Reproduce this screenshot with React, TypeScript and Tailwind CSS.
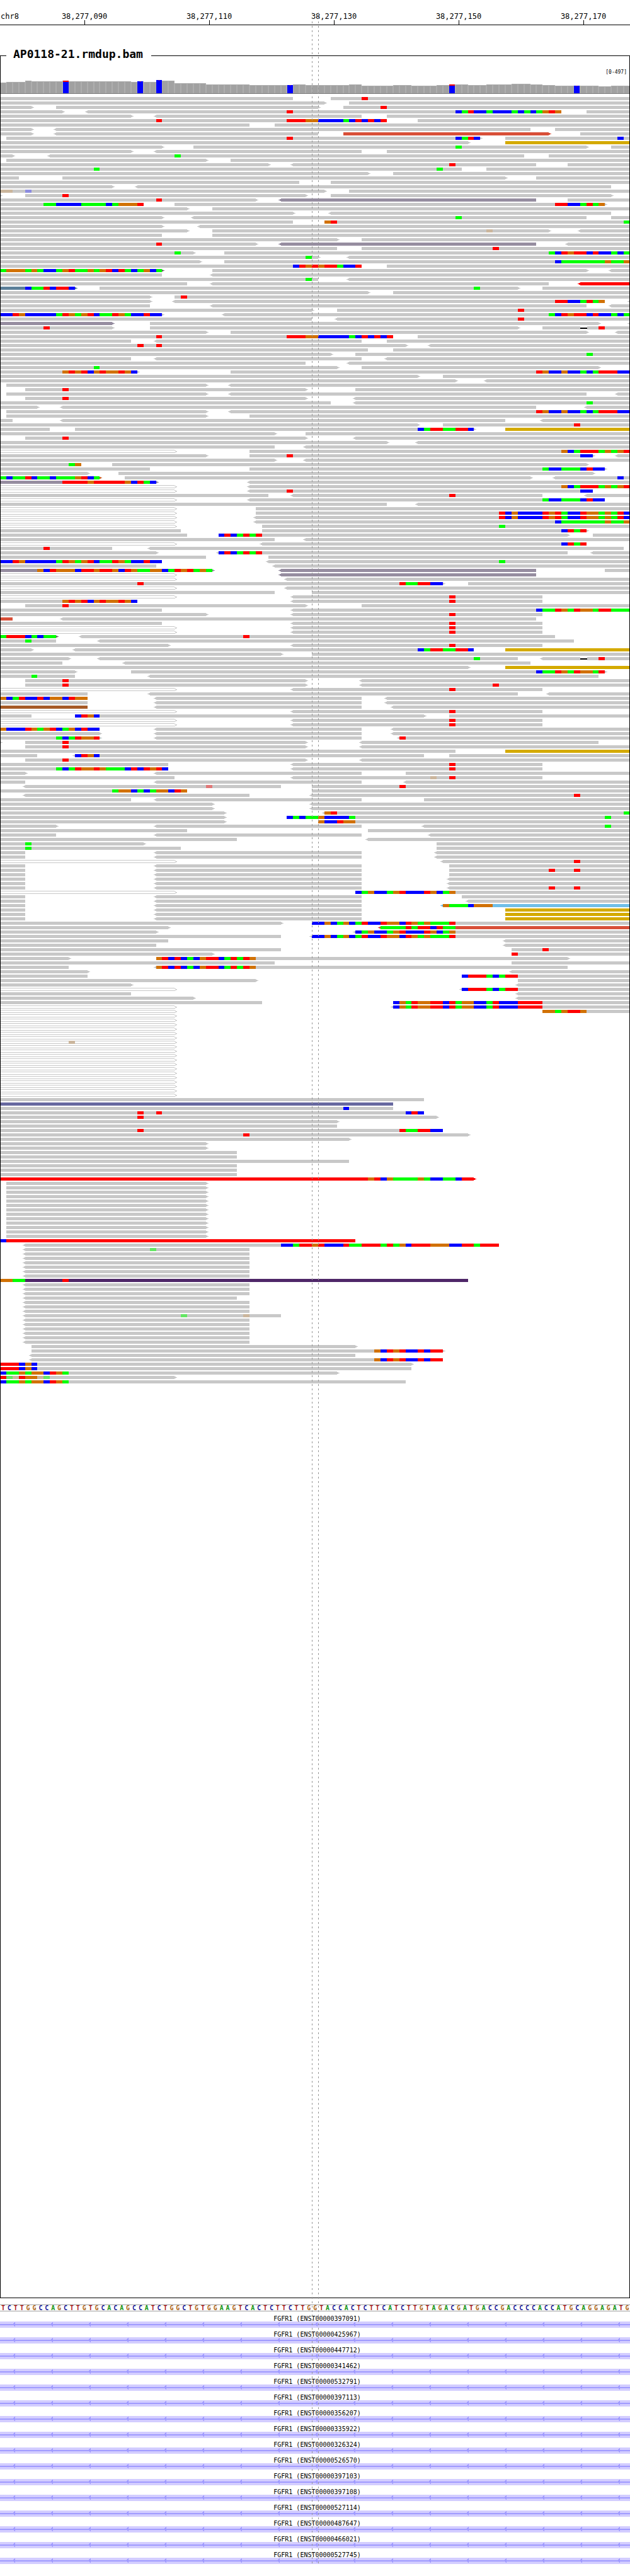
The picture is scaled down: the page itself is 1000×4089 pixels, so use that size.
import React from "react";

const MONO = "font-['DejaVu_Sans_Mono','Liberation_Mono',monospace]";

/* Horizontal pixel of the left edge of base n (101 bases over 1000 units). */
const px = (n: number) => Math.round((n * 99) / 10);

const FILL: Record<string, string> = {
  A: "#00ff00",
  C: "#0000ff",
  G: "#d17105",
  T: "#ff0000",
  a: "#64e664",
  c: "#8c8ce0",
  g: "#cbb69d",
  t: "#e07878",
};

const READ_FILL: Record<string, string> = {
  p: "#968da0",
  s: "#d84f38",
  y: "#d4aa00",
  r: "#ff0000",
  b: "#5b7f99",
  k: "#6e6e6e",
  v: "#67689f",
  u: "#4e2768",
  w: "#a65a26",
  l: "#70bfe8",
  n: "#c8641e",
};

/*
 * One string per alignment row. A read is written
 *   [o][<]start-end[>][:colour][@pos BASES]...
 * o = outlined (mapping quality zero), < and > = strand arrows,
 * lower-case bases have a low quality, "-" is a deletion.
 */
const TC = "CATTAATTC";
const ACT = "ACTGTTCTCCACA";
const CCTG = "CCTGCCCCCATGAGTCAATGACCTCC";
const TGCC = "TGCCGCCACATTTCC";
const TCG = "TCGCCCCTGTACCTGGAGATC";
const CAG = "CAGCCAGTCCCTGCAG";
const CCG = "CCGCAGCATCCTGGCTGAGAAAT";
const GTC = "GTCTCACGTTCATATG";
const CGA = "CGATGGTTCTAGGCCATCCCTTTT";
const OUT = "o0-28>";
const rep = (s: string, n: number): string[] => Array(n).fill(s);

const ROWS: string[] = [
  "0-47 53-101@58T",
  "0-52> 56-101",
  "0-5> 9-51> 55-101@61T",
  "0-10> <14-90@46T@73CATCCACCCACACAGTG 94-101",
  "0-21> <25-58 62-101",
  "0-62@25T@46TTTGGCCCCACTCTCT 67-101",
  "0-40 44-101",
  "0-5> <9-85 89-101",
  "0-5> <9-51 55-88>:s 93-101",
  "1-77>@46T@73CATC 81-101@99C",
  "0-75> 81-101:y",
  "0-26> 31-94>@73A 98-101",
  "0-21> <25-58 62-101",
  "0-2> <8-84@28A 88-101",
  "1-33> 37-101",
  "0-43> <47-86@72T 91-101",
  "0-74@15A@70A 78-101",
  "0-59> 63-101",
  "0-3 10-81> 86-101",
  "0-48 53-101",
  "0-18> <22-98",
  "0-52>@0gg@4c 56-101",
  "0-0> 4-49>@10T 53-98>",
  "0-41>@25T <45-86:p 91-101",
  "0-23@7AACCCCAAAACAGGGT 28-97>@89TTCCATAG",
  "0-30> 34-101",
  "0-47> <53-98",
  "0-26> <31-94@73A 98-101",
  "0-47 52-101@52GT@100A",
  "0-26> <32-101",
  "0-30> 34-88>@78g <93-101",
  "0-26 34-101",
  "0-54> 58-101",
  "0-41>@25T <45-86:p <91-101",
  "0-54 58-101@79T",
  `0-31>@28A 36-101@88${ACT}`,
  "0-51>@49A <56-101",
  "0-32> 36-101@89CAAAAAAAGAAG",
  "0-58@47CTGTGTTACCT 62-101",
  "0-26>:k@0AGGGAGACCAGTAAGAGTCTACAGCA 34-94> <98-101",
  "0-26 <34-101",
  "0-51@49A <56-101",
  "0-30 <34-88 <93-101:r",
  "0-12>:b@4CAATCTTC 16-83>@76A 87-101",
  "0-59> 63-101",
  "0-24> 28-101@29T",
  "0-24> <28-97@89TTCCATAG <101-101",
  "0-24 <34-94 <98-101",
  "0-50> 54-101@83T",
  `0-26>@0${CCTG} <36-101@88${ACT}`,
  "0-50 <54-101@83T",
  "0-18>:p 24-96> <101-101",
  "0-18>@7T 24-83> 87-101@93-@96T",
  "0-33> 37-94> <99-101",
  "0-63@25T@46TTTGGCCCCCACTCTCT 67-101",
  "0-21 <25-58 62-101",
  "0-65>@22T@25T <69-101",
  "0-59 63-101",
  "0-53> 57-101@94A",
  "0-21 <25-58 <62-101",
  "0-49 <56-101",
  "0-54>@15A 58-96>",
  `0-22>@10GTGTCGTGGTGC 37-101@86${TGCC}`,
  "0-67> 71-101",
  "0-73> <78-101",
  "1-33> <37-101",
  "4-49>@10T 57-101",
  "1-33> <37-94 <99-101",
  "4-49>@10T <57-101",
  "0-53 <57-101@94A",
  "0-6> <10-86 <94-101",
  `1-33> <37-101@86${TGCC}`,
  "1-33> 40-101",
  "0-2 <10-81 <87-101",
  "0-67> 71-101@92T",
  `0-8 12-76>@67${TC} 81-101:y`,
  "0-44> 49-101",
  "4-49>@10T <57-101",
  "0-62> <67-101",
  "0-44 <49-101",
  `${OUT} 40-101@90GCATTTAGAGT`,
  "0-33> 40-95>@46T@93CC <99-101",
  "0-44> <49-101",
  "0-13@11AG 18-94>",
  "0-24 40-97>@87ACCAAACTCC",
  "0-14> 19-95>",
  "0-16>:n@0ACAATCAACAAAGTCA 20-85> <89-101@99C",
  "0-25>:p@10TTTTGTTTTTGCTAC <40-101",
  `${OUT} <40-101@90GCATTTAGAGT`,
  `${OUT} <40-95@46T@93CC`,
  "0-43 <47-87@72T <94-101",
  `${OUT} <40-97@87ACCAAACTCC`,
  "0-62 <67-101",
  `${OUT} 41-101`,
  `${OUT} 41-101@80${TCG}`,
  `${OUT} <41-101@80${TCG}`,
  `${OUT} <41-101@89CAAAAAAAGAAG`,
  `${OUT} 42-101@80A`,
  "0-29 42-94>@90CTAT",
  "0-30 35-91>@35CTCATAT 95-101",
  "0-44 <49-101",
  `${OUT} <42-94@90CTAT`,
  "0-18@7T <24-100",
  "0-25> <35-91@35CTCATAT <95-101",
  "0-33 43-101",
  `0-26@0${CCTG} <43-101@80A`,
  "0-25 <44-101",
  "0-34>:p@6GCTGGGCTTGTTGCTGAAGGCATGTAGA <45-86:p 97-101",
  `${OUT} <45-86:p`,
  `${OUT} <46-101`,
  "0-71>@22T@64TAATTCC 75-101",
  `${OUT} <46-101`,
  "0-44 50-101",
  `${OUT} <47-87@72T`,
  "0-22@10GTGTCGTGGTGC <47-87@72T",
  "4-49>@10T 58-101",
  "0-26 <47-101@86CAATGATGGATTAAA",
  "0-33> <47-87@72T",
  "0-2:s <10-86",
  "0-26 <47-87@72T",
  ...rep(`${OUT} <47-87@72T`, 2),
  "0-9>:k@0ATTTCACAA <13-89@39T",
  "0-9@4A <16-92",
  "0-27> <47-87@72T",
  `0-5> <12-76@67${TC} 81-101:y`,
  "0-45> 50-101",
  "0-11> <16-83@76A <87-101@93-@96T",
  "0-10 <20-85",
  "0-75> 81-101:y",
  "0-12> 21-97>@86CAATGATGGAT",
  "0-12@5A <24-96",
  "4-49>@10T <58-101",
  "4-49>@10T <58-101@79T",
  `${OUT} <47-87@72T`,
  "0-14 <24-83 <88-101",
  "0-14@0GCATCCTCGGCTGG <25-58 <62-101",
  "0-14 <25-58 <62-101",
  "0-14:w <25-58 <63-101",
  `${OUT} <47-87@72T`,
  "0-5 12-68>@12CTGC 72-101",
  ...rep(`${OUT} <47-87@72T`, 2),
  "0-16@0GCCCTGAGTCAGCTCC <25-58 <63-101",
  "0-16> <25-58 <63-101",
  "0-16>@9ACATGGT <25-58 <64-101@64T",
  "0-0> 4-49>@10T <58-96",
  "4-49>@10T <58-101",
  "0-73 81-101:y",
  "0-6 <12-68@12CTGC 72-101",
  "4-49>@10T <58-101",
  "0-27 <47-87@72T",
  "0-27@9ACATGGTGAAACTCTGTC <47-87@72T",
  "0-4> <25-58 65-101",
  "0-28 <47-87@69g@72T",
  "0-4 <25-58 <65-101",
  "<4-45@33t 50-101@64T",
  "0-30@18AGGCACAGGCTG 50-101",
  "<4-40 <50-101@92T",
  "0-21 <25-58 68-101",
  ...rep("0-34> <50-101", 2),
  "0-36> <52-101@52GT@100A",
  "0-36> 46-101@46CACAAGCCCCA@97A",
  "0-36> 51-101@51GCCTGG",
  "0-9> <25-58 <68-101@97A",
  "0-30 59-101",
  "0-9 <25-58 <69-101",
  "0-38 <59-101",
  "0-23>@4A 70-101",
  "0-29@4A 70-101",
  ...rep("0-4 <25-58 <70-101", 2),
  `${OUT} <71-101@92T`,
  "0-4 <25-58 72-101",
  "0-4 <25-58 72-101@88T@92T",
  "0-4 <25-58 72-101",
  ...rep("0-4 <25-58 <72-101", 2),
  "0-4 <25-58 <72-101@88T@92T",
  `${OUT} 57-101@57${CAG}`,
  "0-4 <25-58 74-101",
  "0-4 <25-58 <75-101",
  "0-4 <25-58 <71-101:l@71GAAACGGG",
  ...rep("0-4 <25-58 81-101:y", 3),
  `0-45> 50-101@50${CCG}`,
  "0-27> <61-101:s@61AAAATATTCTAA",
  `0-25> <57-101@57${CAG}`,
  `0-45 <50-101@50${CCG}`,
  "0-27 <81-101",
  "0-25 <81-101",
  "0-45 82-101@87T",
  "0-34> 82-101@82T",
  `0-11> 25-91>@25${GTC}`,
  "0-44 82-101",
  `0-11 <25-91@25${GTC}`,
  "0-14> <82-101",
  "0-14 74-101@74CTTTACATT",
  "0-41> 83-101",
  "0-21> <83-101",
  `${OUT} <74-101@74CTTTACATT`,
  "0-21 <83-101",
  "0-31> <83-101",
  `0-42 63-101@63${CGA}`,
  `${OUT} <63-101@63${CGA}`,
  `${OUT} 87-101@87GGAGTTG`,
  ...rep(OUT, 6),
  `${OUT}@11g`,
  ...rep(OUT, 12),
  "0-68",
  "0-63:v",
  "0-63@55C",
  "0-68@22T@25T@65CTC",
  "0-70>@22T",
  "0-54>",
  "0-54",
  "0-71@22T@64TAATTCC",
  "0-75>@39T",
  "0-56>",
  ...rep("0-33>", 2),
  ...rep("0-38", 2),
  "0-56",
  ...rep("0-38", 3),
  "0-76>:r@59GTCGAAAAGACCAAC",
  ...rep("1-33>", 13),
  "0-57:r@0C",
  "<4-80@45CCATTGTCCCTAATTTATAGCTTTGGGCCTTATTT",
  "<4-40@24a",
  ...rep("<4-40", 6),
  "0-75:u@0GGAA@10T",
  ...rep("<4-40", 3),
  "<4-38",
  ...rep("<4-40", 3),
  "<4-45@29a@39g",
  ...rep("<4-40", 6),
  "5-57>",
  "5-71>@60GCTGTCCTCTT",
  "<5-57",
  "<5-71@60GCTGTCCTCTT",
  "0-66>@0TTTCGC",
  "0-66@0TTTCGC",
  "0-54>@0CAAGAGGCTGA",
  "0-28>@0TagTGGga",
  "0-65@0CAAGAGGCTGA",
];

const READ = /^(o?)(<?)(\d+)-(\d+)(>?)(?::(\w))?(.*)$/;

function Read({ code, y }: { code: string; y: number }) {
  const m = READ.exec(code);
  if (!m) return null;
  const [, outlined, left, s, e, right, colour, rest] = m;
  const x0 = px(Number(s));
  const x1 = px(Number(e));
  const fill = colour ? READ_FILL[colour] : "#c8c8c8";
  const marks = rest.split("@").filter(Boolean);

  return (
    <g fill={fill}>
      {outlined ? (
        <path
          d={`M${x0} ${y}H${x1}v1H${x0}zM${x1} ${y + 1}h2v1h-2zM${x1 + 2} ${y + 2}h2v1h-2zM${x1 + 1} ${y + 3}h2v1h-2zM${x0} ${y + 4}H${x1 + 1}v1H${x0}z`}
        />
      ) : (
        <>
          <rect x={x0} y={y} width={x1 - x0} height={5} />
          {left && <path d={`M${x0} ${y + 1}h-2v1h-2v1h2v1h2z`} />}
          {right && <path d={`M${x1} ${y + 1}h2v1h2v1h-2v1h-2z`} />}
        </>
      )}
      {marks.map((mark) => {
        const parts = /^(\d+)(.*)$/.exec(mark);
        if (!parts) return null;
        const pos = Number(parts[1]);
        return parts[2].split("").map((base, i) => {
          const a = px(pos + i);
          const b = px(pos + i + 1);
          return base === "-" ? (
            <React.Fragment key={pos + i}>
              <rect x={a} y={y} width={b - a + 1} height={5} fill="#ffffff" />
              <rect x={a} y={y + 2} width={b - a + 1} height={2} fill="#000000" />
            </React.Fragment>
          ) : (
            <rect key={pos + i} x={a} y={y} width={b - a} height={5} fill={FILL[base]} />
          );
        });
      })}
    </g>
  );
}

/* [number of bases, depth in pixels] along the coverage histogram. */
const DEPTH: [number, number][] = [
  [1, 17], [3, 18], [1, 20], [5, 19], [1, 20], [10, 19], [1, 18], [1, 19], [2, 18],
  [1, 21], [2, 20], [5, 16], [7, 14], [7, 13], [2, 14], [7, 13], [2, 14], [5, 12],
  [3, 13], [4, 12], [2, 13], [3, 14], [3, 13], [4, 14], [3, 15], [2, 14], [2, 13],
  [7, 12], [2, 11], [3, 12],
];
const COVERAGE = DEPTH.flatMap(([n, d]) => Array<number>(n).fill(d));
/* Variant bases with the height of their red share. */
const VARIANTS: Record<number, number> = { 10: 2, 22: 0, 25: 0, 46: 0, 72: 2, 92: 0 };

function Coverage() {
  return (
    <svg
      className="block h-[22px] w-full"
      viewBox="1 0 998 22"
      preserveAspectRatio="none"
      shapeRendering="crispEdges"
      role="img"
      aria-label="Coverage"
    >
      {COVERAGE.map((d, i) => {
        const x = px(i);
        const w = px(i + 1) - x;
        const vx = Math.floor((i * 99) / 10) + 1;
        const red = VARIANTS[i];
        return (
          <g key={i}>
            <rect x={x} y={21 - d} width={w} height={d} fill="#aeaeae" />
            <rect x={x + 1} y={22 - d} width={w - 2} height={d - 1} fill="#a1a1a1" />
            {red !== undefined && (
              <>
                <rect x={vx} y={21 - d} width={9} height={d} fill="#0000ff" />
                <rect
                  x={red ? vx : vx + 4}
                  y={21 - d}
                  width={red ? 9 : 1}
                  height={red || 1}
                  fill="#ff0000"
                />
              </>
            )}
          </g>
        );
      })}
      <rect x={0} y={21} width={1000} height={1} fill="#787878" />
    </svg>
  );
}

function Reads() {
  return (
    <svg
      className="block h-[3498px] w-full"
      viewBox="1 0 998 3498"
      preserveAspectRatio="none"
      shapeRendering="crispEdges"
      role="img"
      aria-label="Aligned reads"
    >
      {ROWS.map((row, k) => (
        <g key={k}>
          {row.split(" ").map((code, i) => (
            <Read key={i} code={code} y={5 + 7 * k} />
          ))}
        </g>
      ))}
    </svg>
  );
}

const TICKS = ["38,277,090", "38,277,110", "38,277,130", "38,277,150", "38,277,170"];

function Ruler() {
  return (
    <header className="flex border-b border-black pt-[21px] text-[12px] leading-[11px]">
      <span className="w-[3.5%] shrink-0 whitespace-nowrap pl-px">chr8</span>
      {TICKS.map((t) => (
        <div key={t} className="flex w-[19.8%] shrink-0 flex-col items-center">
          <span>{t}</span>
          <span className="h-[7px] w-px bg-black" />
        </div>
      ))}
    </header>
  );
}

const SEQUENCE =
  "TCTTGGCCAGCTTGTGCACAGCCATCTGGCTGTGGAAGTCACTCTTCTTGG" +
  "TACCACTCTTCATCTTGTAGACGATGACCGACCCCACCATGCAGGAGATG";

const LETTER: Record<string, string> = {
  A: "text-[#149614]",
  C: "text-[#141496]",
  G: "text-[#b0691a]",
  T: "text-[#a81414]",
};

function Sequence() {
  return (
    <div className="flex h-[11px] border-y border-[#a0a0a0] text-[10px] leading-[9px] font-bold">
      {SEQUENCE.split("").map((b, i) => (
        <span key={i} className={`w-0 flex-1 text-center ${LETTER[b]}`}>
          {b}
        </span>
      ))}
    </div>
  );
}

const TRANSCRIPTS = [
  "ENST00000397091", "ENST00000425967", "ENST00000447712", "ENST00000341462",
  "ENST00000532791", "ENST00000397113", "ENST00000356207", "ENST00000335922",
  "ENST00000326324", "ENST00000526570", "ENST00000397103", "ENST00000397108",
  "ENST00000527114", "ENST00000487647", "ENST00000466021", "ENST00000527745",
];

function Transcript({ id }: { id: string }) {
  return (
    <li>
      <p className="h-[15px] pt-[5px] pl-[7px] text-center text-[10px] leading-[12px]">FGFR1 ({id})</p>
      <svg
        className="block h-[10px] w-full bg-[#d3cdff]"
        viewBox="0 0 1000 10"
        preserveAspectRatio="none"
        shapeRendering="crispEdges"
        fill="#a09bff"
        aria-hidden="true"
      >
        <rect x={0} y={4} width={1000} height={2} />
        {Array.from({ length: 17 }, (_, i) => (
          <path key={i} d={`M${24 + 60 * i} 1v7h-1v-1h-1v-1h-1v-3h1v-1h1v-1z`} />
        ))}
      </svg>
    </li>
  );
}

function Guide({ className }: { className: string }) {
  return (
    <div
      className={`pointer-events-none absolute top-5 bottom-5 w-px bg-[repeating-linear-gradient(to_bottom,#969696_0px,#969696_3px,transparent_3px,transparent_7px)] ${className}`}
    />
  );
}

export default function App() {
  return (
    <main className={`relative w-full overflow-hidden bg-white pb-[19px] text-black ${MONO}`}>
      <Ruler />
      <fieldset className="mt-9 border border-black">
        <legend className="ml-[9px] w-[230px] pb-1 pl-[11px] text-[18px] leading-[20px] font-bold whitespace-nowrap">
          AP0118-21.rmdup.bam
        </legend>
        <p className="h-[27px] pt-[10px] pr-1 text-right text-[8px] leading-[10px]">[0-497]</p>
        <Coverage />
        <Reads />
      </fieldset>
      <div className="mt-[10px]">
        <Sequence />
        <ul className="mt-px">
          {TRANSCRIPTS.map((id) => (
            <Transcript key={id} id={id} />
          ))}
        </ul>
      </div>
      <Guide className="left-[49.5%]" />
      <Guide className="left-[50.5%]" />
    </main>
  );
}
